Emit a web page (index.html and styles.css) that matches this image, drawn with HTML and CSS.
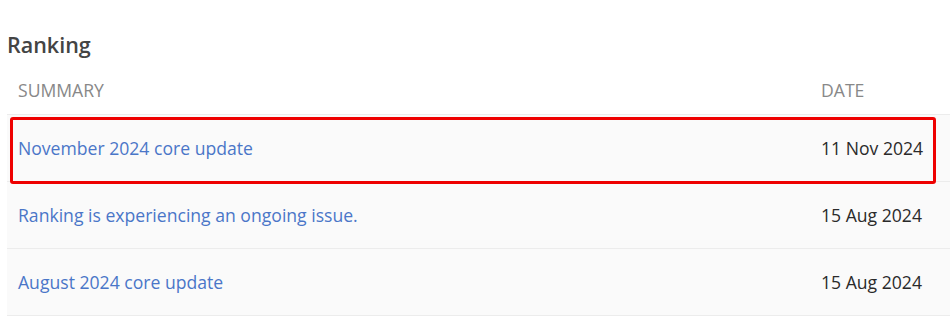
FILE: index.html
```html
<!DOCTYPE html>
<html lang="en">
<head>
    <meta charset="UTF-8">
    <meta name="viewport" content="width=device-width, initial-scale=1.0">
    <title>Ranking incidents</title>
    <link rel="stylesheet" href="styles.css">
</head>
<body>
    <section class="incidents">
        <h2 class="incidents-title">Ranking</h2>

        <table class="incident-table">
            <thead>
                <tr>
                    <th class="col-summary">Summary</th>
                    <th class="col-date">Date</th>
                </tr>
            </thead>
            <tbody>
                <tr class="highlight">
                    <td class="col-summary"><a href="#">November 2024 core update</a></td>
                    <td class="col-date">11 Nov 2024</td>
                </tr>
                <tr>
                    <td class="col-summary"><a href="#">Ranking is experiencing an ongoing issue.</a></td>
                    <td class="col-date">15 Aug 2024</td>
                </tr>
                <tr>
                    <td class="col-summary"><a href="#">August 2024 core update</a></td>
                    <td class="col-date">15 Aug 2024</td>
                </tr>
            </tbody>
        </table>
    </section>
</body>
</html>
```

FILE: styles.css
```css
:root {
    --heading-color: #444;
    --muted-color: #888;
    --link-color: #4a76c8;
    --text-color: #2a2a2a;
    --row-background: #fafafa;
    --row-border: #ececec;
}

body {
    font-family: "Open Sans", "Noto Sans", sans-serif;
    margin: 0;
    background: white;
    color: var(--text-color);
}

.incidents {
    padding: 30px 0 0 7px;
}

.incidents-title {
    margin: 0 0 9px 0;
    font-size: 21.5px;
    font-weight: 600;
    line-height: 30px;
    color: var(--heading-color);
}

.incident-table {
    width: 100%;
    border-collapse: collapse;
}

.incident-table th {
    text-align: left;
    font-size: 17.6px;
    font-weight: 400;
    text-transform: uppercase;
    color: var(--muted-color);
    padding: 0 11px 4px 11px;
    height: 41px;
    border-bottom: 1px solid var(--row-border);
}

.incident-table td {
    background: var(--row-background);
    font-size: 17.6px;
    padding: 0 11px;
    height: 66px;
    border-bottom: 1px solid var(--row-border);
}

.col-date {
    width: 118px;
}

.incident-table a {
    color: var(--link-color);
    text-decoration: none;
}

.highlight td {
    position: relative;
}

/* red marker box round the first row */
.highlight td.col-summary::before {
    content: "";
    position: absolute;
    z-index: 1;
    left: 3px;
    top: 2px;
    box-sizing: border-box;
    width: 926px;
    height: 67px;
    border: 3px solid #ee0000;
    border-radius: 3px;
    pointer-events: none;
}
```
